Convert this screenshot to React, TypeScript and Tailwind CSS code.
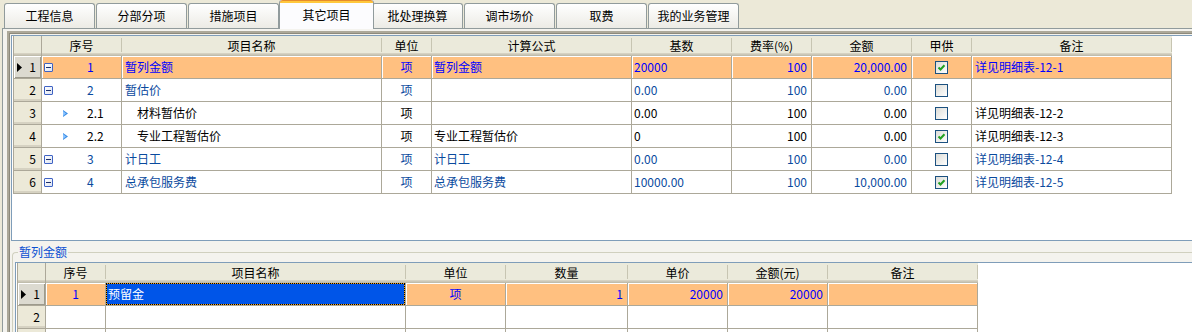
import React from 'react';

type TopRow = {
  level: 'top' | 'child';
  seq: string;
  name: string;
  unit: string;
  formula: string;
  base: string;
  rate: string;
  amount: string;
  supply: boolean;
  note: string;
  selected?: boolean;
};

const tabs = ['工程信息', '分部分项', '措施项目', '其它项目', '批处理换算', '调市场价', '取费', '我的业务管理'];

const topRows: TopRow[] = [
  { level: 'top', seq: '1', name: '暂列金额', unit: '项', formula: '暂列金额', base: '20000', rate: '100', amount: '20,000.00', supply: true, note: '详见明细表-12-1', selected: true },
  { level: 'top', seq: '2', name: '暂估价', unit: '项', formula: '', base: '0.00', rate: '100', amount: '0.00', supply: false, note: '' },
  { level: 'child', seq: '2.1', name: '材料暂估价', unit: '项', formula: '', base: '0.00', rate: '100', amount: '0.00', supply: false, note: '详见明细表-12-2' },
  { level: 'child', seq: '2.2', name: '专业工程暂估价', unit: '项', formula: '专业工程暂估价', base: '0', rate: '100', amount: '0.00', supply: true, note: '详见明细表-12-3' },
  { level: 'top', seq: '3', name: '计日工', unit: '项', formula: '计日工', base: '0.00', rate: '100', amount: '0.00', supply: false, note: '详见明细表-12-4' },
  { level: 'top', seq: '4', name: '总承包服务费', unit: '项', formula: '总承包服务费', base: '10000.00', rate: '100', amount: '10,000.00', supply: true, note: '详见明细表-12-5' },
];

const headShade =
  'bg-[#ebeadb] shadow-[inset_0_-1px_0_#c0bdac,inset_0_-2px_0_#cbc7b8,inset_0_-3px_0_#d6d2c2]';

function HeadCell({ w, label }: { w: string; label: string }) {
  return (
    <div className={`${w} flex h-full items-center ${headShade}`}>
      <span className="flex-1 text-center">{label}</span>
      <span className="mb-[2px] h-[14px] w-px bg-[#c7c5b2] shadow-[1px_0_0_#fff]" />
    </div>
  );
}

function RowHead({ n, current }: { n: string; current?: boolean }) {
  return (
    <div
      className={`flex w-[28px] shrink-0 items-center border-r border-b border-[#aca899] pr-[5px] text-black ${
        current
          ? 'justify-between bg-[#dcdad0] pl-[3px] shadow-[inset_1px_1px_0_#fff,inset_-1px_-1px_0_#9d9a8c]'
          : 'justify-end bg-[#ece9d8] shadow-[inset_0_-2px_0_#d6d2c2]'
      }`}
    >
      {current && (
        <svg width="5" height="9" viewBox="0 0 5 9">
          <polygon points="0,0 5,4.5 0,9" fill="#000" />
        </svg>
      )}
      <span>{n}</span>
    </div>
  );
}

function MinusBox() {
  return (
    <span className="flex h-[9px] w-[9px] items-center justify-center rounded-[1px] border border-[#3f63c4] bg-linear-to-br from-white to-[#dde4f2]">
      <span className="h-px w-[5px] bg-[#1c2f6b]" />
    </span>
  );
}

function Arrow() {
  return (
    <svg width="5" height="7" viewBox="0 0 5 7" className="ml-[19px]">
      <polygon points="0,0 5,3.5 0,7" fill="#3d8fe6" />
      <polygon points="0,1 3,3.5 0,6" fill="#8cc4ff" />
    </svg>
  );
}

function Check({ on }: { on: boolean }) {
  return (
    <span className="flex h-[13px] w-[13px] items-center justify-center border border-[#1c5180] bg-linear-to-br from-[#dcdcd7] to-white">
      {on && (
        <svg width="9" height="9" viewBox="0 0 9 9">
          <path d="M1.5 4.5 L3.5 6.5 L7.5 2.2" stroke="#21a121" strokeWidth="2" fill="none" />
        </svg>
      )}
    </span>
  );
}

function TopGrid() {
  const cell = 'flex h-full items-center border-r border-b border-[#aca899] overflow-hidden whitespace-nowrap';
  return (
    <div className="w-fit border-l border-[#aca899]">
      <div className="flex h-[20px]">
        <div className={`w-[28px] border-r border-[#aca899] ${headShade}`} />
        <HeadCell w="w-[80px]" label="序号" />
        <HeadCell w="w-[260px]" label="项目名称" />
        <HeadCell w="w-[50px]" label="单位" />
        <HeadCell w="w-[200px]" label="计算公式" />
        <HeadCell w="w-[100px]" label="基数" />
        <HeadCell w="w-[80px]" label="费率(%)" />
        <HeadCell w="w-[100px]" label="金额" />
        <HeadCell w="w-[60px]" label="甲供" />
        <HeadCell w="w-[200px]" label="备注" />
      </div>
      {topRows.map((r, i) => {
        const color = r.selected ? 'text-[#0000ff]' : r.level === 'top' ? 'text-[#0a4a9e]' : 'text-black';
        const bg = r.selected ? 'bg-[#ffc080] shadow-[inset_1px_1px_0_#fff]' : 'bg-white';
        return (
          <div key={i} className="flex h-[23px]">
            <RowHead n={String(i + 1)} current={r.selected} />
            <div className={`${cell} ${bg} ${color} w-[80px] pl-[2px]`}>
              <span className="flex w-[43px] items-center">{r.level === 'top' ? <MinusBox /> : <Arrow />}</span>
              <span>{r.seq}</span>
            </div>
            <div className={`${cell} ${bg} ${color} w-[260px] ${r.level === 'top' ? 'pl-[3px]' : 'pl-[15px]'}`}>{r.name}</div>
            <div className={`${cell} ${bg} ${color} w-[50px] justify-center`}>{r.unit}</div>
            <div className={`${cell} ${bg} ${color} w-[200px] pl-[2px]`}>{r.formula}</div>
            <div className={`${cell} ${bg} ${color} w-[100px] pl-[2px]`}>{r.base}</div>
            <div className={`${cell} ${bg} ${color} w-[80px] justify-end pr-[4px]`}>{r.rate}</div>
            <div className={`${cell} ${bg} ${color} w-[100px] justify-end pr-[4px]`}>{r.amount}</div>
            <div className={`${cell} ${bg} w-[60px] justify-center`}>
              <Check on={r.supply} />
            </div>
            <div className={`${cell} ${bg} ${color} w-[200px] pl-[3px]`}>{r.note}</div>
          </div>
        );
      })}
    </div>
  );
}

function BottomGrid() {
  const cell = 'flex h-full items-center border-r border-b border-[#aca899] overflow-hidden whitespace-nowrap';
  const sel = 'bg-[#ffc080] shadow-[inset_1px_1px_0_#fff] text-[#0000ff]';
  return (
    <div className="w-fit border-l border-[#aca899]">
      <div className="flex h-[20px]">
        <div className={`w-[28px] border-r border-[#aca899] ${headShade}`} />
        <HeadCell w="w-[60px]" label="序号" />
        <HeadCell w="w-[300px]" label="项目名称" />
        <HeadCell w="w-[100px]" label="单位" />
        <HeadCell w="w-[122px]" label="数量" />
        <HeadCell w="w-[100px]" label="单价" />
        <HeadCell w="w-[100px]" label="金额(元)" />
        <HeadCell w="w-[150px]" label="备注" />
      </div>
      <div className="flex h-[23px]">
        <RowHead n="1" current />
        <div className={`${cell} ${sel} w-[60px] justify-center`}>1</div>
        <div className={`${cell} w-[300px]`}>
          <div className="h-full w-full border border-dotted border-black bg-[#f7a21b]">
            <div className="flex h-full items-center bg-[#0055e8] pl-[1px] text-white">预留金</div>
          </div>
        </div>
        <div className={`${cell} ${sel} w-[100px] justify-center`}>项</div>
        <div className={`${cell} ${sel} w-[122px] justify-end pr-[4px]`}>1</div>
        <div className={`${cell} ${sel} w-[100px] justify-end pr-[4px]`}>20000</div>
        <div className={`${cell} ${sel} w-[100px] justify-end pr-[4px]`}>20000</div>
        <div className={`${cell} ${sel} w-[150px]`} />
      </div>
      {['2', ''].map((n, i) => (
        <div key={i} className="flex h-[23px]">
          <RowHead n={n} />
          <div className={`${cell} w-[60px]`} />
          <div className={`${cell} w-[300px]`} />
          <div className={`${cell} w-[100px]`} />
          <div className={`${cell} w-[122px]`} />
          <div className={`${cell} w-[100px]`} />
          <div className={`${cell} w-[100px]`} />
          <div className={`${cell} w-[150px]`} />
        </div>
      ))}
    </div>
  );
}

export default function App() {
  return (
    <div className="h-[332px] w-[1192px] overflow-hidden bg-[#ece9d8] font-['Noto_Sans_CJK_SC','Liberation_Sans',sans-serif] text-[12px] leading-none text-black">
      {/* tab strip */}
      <div className="flex h-[28px] items-end gap-[1px] pl-[4px]">
        {tabs.map((t) =>
          t === '其它项目' ? (
            <div
              key={t}
              className="relative z-10 -mr-[3px] -mb-[1px] -ml-[1px] flex h-[29px] w-[95px] flex-col rounded-t-[3px] border-x border-[#919b9c] bg-[#fcfcfe]"
            >
              <div className="h-[3px] rounded-t-[3px] border-t border-[#e68b2c] bg-[#ffc83c]" />
              <div className="flex flex-1 items-center justify-center pb-[2px]">{t}</div>
            </div>
          ) : (
            <div
              key={t}
              className="flex h-[25px] w-[91px] items-center justify-center rounded-t-[3px] border border-b-0 border-[#919b9c] bg-linear-to-b from-white to-[#ecebe5]"
            >
              {t}
            </div>
          )
        )}
      </div>

      {/* tab page */}
      <div className="ml-[2px] h-[304px] border-t border-l border-[#919b9c] bg-[#f4f3ee] pt-[2px] pl-[4px]">
        <div className="h-full border-t-2 border-l-2 border-[#aca899] bg-[#f4f3ee] pt-[2px] pl-[2px] shadow-[inset_1px_1px_0_#8d8a7c]">
          <div className="h-[206px] border-y border-l border-[#7f9db9] bg-white pl-[1px]">
            <TopGrid />
          </div>

          <fieldset className="mt-[4px] ml-[1px] min-w-0 rounded-tl-[4px] border-t border-l border-[#d0d0bf] pt-[3px] pl-[2px]">
            <legend className="ml-[3px] px-[1px] text-[12px] leading-[14px] text-[#0a4fd2]">暂列金额</legend>
            <div className="h-[80px] border-t border-l border-[#7f9db9] bg-white pl-[1px]">
              <BottomGrid />
            </div>
          </fieldset>
        </div>
      </div>
    </div>
  );
}
